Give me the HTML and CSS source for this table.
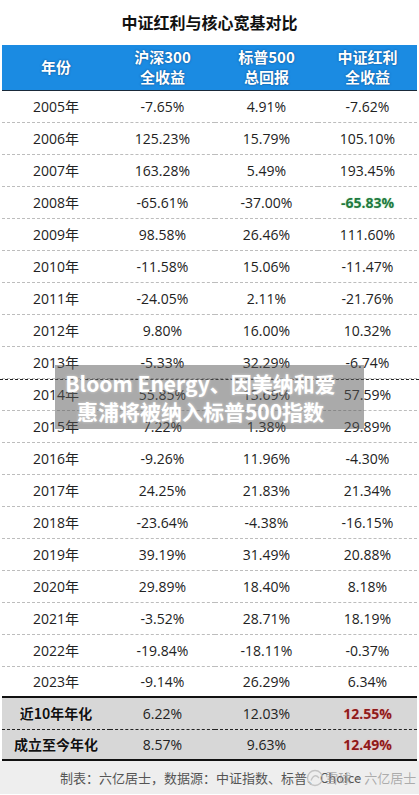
FILE: index.html
```html
<html>
<head>
	<meta charset="utf-8">
	<title>中证红利与核心宽基对比</title>
	<link rel="stylesheet" href="styles.css">
</head>
<body>

	<div class="page">
		<div class="title">中证红利与核心宽基对比</div>

		<table class="grid">
			<tr class="head">
				<th class="c1">年份</th>
				<th class="c2">沪深300<br>全收益</th>
				<th class="c3">标普500<br>总回报</th>
				<th class="c4">中证红利<br>全收益</th>
			</tr>
			<tr><td>2005年</td><td>-7.65%</td><td>4.91%</td><td>-7.62%</td></tr>
			<tr><td>2006年</td><td>125.23%</td><td>15.79%</td><td>105.10%</td></tr>
			<tr><td>2007年</td><td>163.28%</td><td>5.49%</td><td>193.45%</td></tr>
			<tr><td>2008年</td><td>-65.61%</td><td>-37.00%</td><td class="green">-65.83%</td></tr>
			<tr><td>2009年</td><td>98.58%</td><td>26.46%</td><td>111.60%</td></tr>
			<tr><td>2010年</td><td>-11.58%</td><td>15.06%</td><td>-11.47%</td></tr>
			<tr><td>2011年</td><td>-24.05%</td><td>2.11%</td><td>-21.76%</td></tr>
			<tr><td>2012年</td><td>9.80%</td><td>16.00%</td><td>10.32%</td></tr>
			<tr><td>2013年</td><td>-5.33%</td><td>32.29%</td><td>-6.74%</td></tr>
			<tr><td>2014年</td><td>55.85%</td><td>13.69%</td><td>57.59%</td></tr>
			<tr><td>2015年</td><td>7.22%</td><td>1.38%</td><td>29.89%</td></tr>
			<tr><td>2016年</td><td>-9.26%</td><td>11.96%</td><td>-4.30%</td></tr>
			<tr><td>2017年</td><td>24.25%</td><td>21.83%</td><td>21.34%</td></tr>
			<tr><td>2018年</td><td>-23.64%</td><td>-4.38%</td><td>-16.15%</td></tr>
			<tr><td>2019年</td><td>39.19%</td><td>31.49%</td><td>20.88%</td></tr>
			<tr><td>2020年</td><td>29.89%</td><td>18.40%</td><td>8.18%</td></tr>
			<tr><td>2021年</td><td>-3.52%</td><td>28.71%</td><td>18.19%</td></tr>
			<tr><td>2022年</td><td>-19.84%</td><td>-18.11%</td><td>-0.37%</td></tr>
			<tr class="last"><td>2023年</td><td>-9.14%</td><td>26.29%</td><td>6.34%</td></tr>
			<tr class="sum first"><td class="label">近10年年化</td><td>6.22%</td><td>12.03%</td><td class="red">12.55%</td></tr>
			<tr class="sum"><td class="label">成立至今年化</td><td>8.57%</td><td>9.63%</td><td class="red">12.49%</td></tr>
		</table>

		<div class="footer">
			<span class="source">制表：六亿居士，数据源：中证指数、标普、Choice</span>
			<span class="mark">
				<svg width="20" height="20" viewBox="0 0 20 20">
					<circle cx="10" cy="10" r="7.5" fill="none" stroke="#c4c4c4" stroke-width="1.3"/>
					<path d="M6 12.5 q3.5 -8 8 -2.5" fill="none" stroke="#c4c4c4" stroke-width="1.3"/>
				</svg>雪球·六亿居士
			</span>
		</div>

		<div class="cut"></div>

		<div class="banner">
			Bloom Energy、因美纳和爱<br>
			惠浦将被纳入标普500指数
		</div>
	</div>

</body>
</html>
```

FILE: styles.css
```css
body {
	margin: 0;
	padding: 0;
	background: white;
	font-family: "Open Sans", "Noto Sans CJK SC", sans-serif;
	color: #222;
}
.page {
	position: relative;
	width: 419px;
	height: 795px;
	overflow: hidden;
}
.title {
	height: 45px;
	line-height: 44px;
	text-align: center;
	font-family: "Noto Sans CJK SC", sans-serif;
	font-weight: bold;
	font-size: 16px;
	color: #111;
}
.grid {
	width: 415px;
	margin: 0 2px;
	border-collapse: collapse;
	border-spacing: 0;
	table-layout: fixed;
}
.grid th,
.grid td {
	padding: 0;
	text-align: center;
	vertical-align: middle;
}
.grid td {
	height: 32px;
	font-size: 14px;
	border-bottom: 1px dashed #bdbdbd;
}
.head th {
	height: 45px;
	background: #1b8be2;
	color: white;
	font-family: "Noto Sans CJK SC", sans-serif;
	font-weight: bold;
	font-size: 15px;
	line-height: 20px;
	text-shadow: 0 0 2px rgba(0, 40, 90, 0.7);
	border-bottom: 1px solid #1a2a3a;
}
.c1 { width: 108px; }
.c2 { width: 105px; }
.c3 { width: 103px; }
.c4 { width: 99px; }
.grid tr.last td {
	border-bottom: 2px solid #111;
	height: 31px;
}
.sum td {
	background: #d7d7d7;
	border-bottom: 1px dashed #222;
}
.sum + .sum td {
	border-bottom: 2px solid #111;
	height: 31px;
}
.sum .label {
	font-family: "Noto Sans CJK SC", sans-serif;
	font-weight: bold;
	font-size: 14px;
	color: #111;
	text-shadow: 0 0 1px white;
}
.green {
	color: #1f7a40;
	font-weight: bold;
	text-shadow: 0 0 2px #bfe8c8;
}
.grid td.red {
	color: #8e1b1b;
	font-weight: bold;
	text-shadow: 0 0 2px #f5b8b8;
}
.footer {
	display: flex;
	align-items: center;
	height: 33px;
	background: #eeeeee;
	font-family: "Noto Sans CJK SC", sans-serif;
	font-size: 13px;
	color: #555;
	padding-left: 60px;
}
.source {
	white-space: nowrap;
}
.mark {
	display: flex;
	align-items: center;
	margin-left: -56px;
	white-space: nowrap;
	color: rgba(150, 150, 150, 0.75);
	font-size: 13px;
}
.cut {
	position: absolute;
	left: 0;
	right: 0;
	top: 379px;
	height: 0;
	border-top: 1px dashed #222;
}
.banner {
	position: absolute;
	left: 55px;
	top: 365px;
	width: 309px;
	height: 64px;
	box-sizing: border-box;
	padding: 4px 18px 0 0;
	background: rgba(85, 85, 85, 0.5);
	color: white;
	font-family: "Noto Sans CJK SC", sans-serif;
	font-weight: bold;
	font-size: 21px;
	line-height: 28px;
	text-align: center;
	text-shadow: 0 0 3px rgba(255, 255, 255, 0.5);
}
```
